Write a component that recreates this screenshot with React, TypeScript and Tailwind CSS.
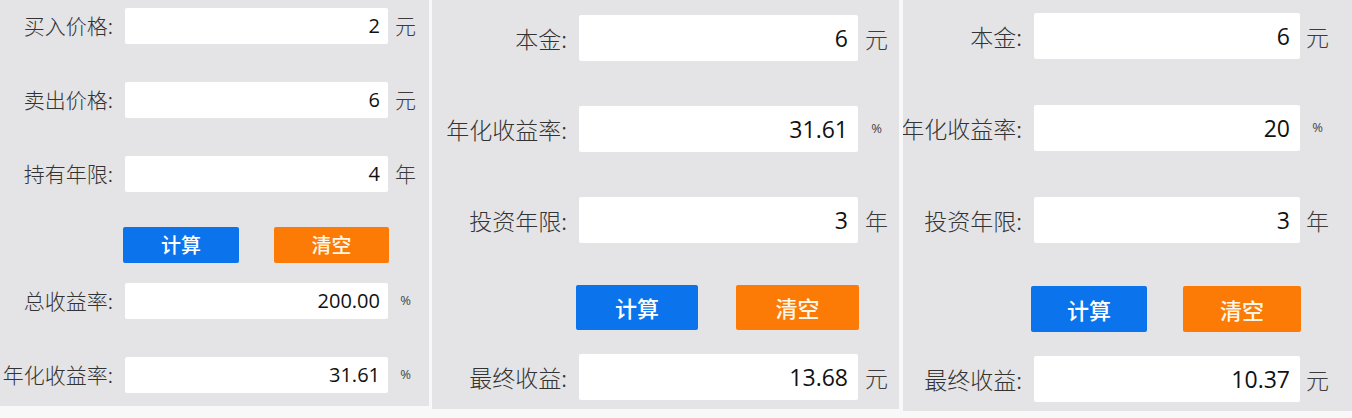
import React from "react";

type Size = {
  label: string;
  labelW: string;
  gap: string;
  input: string;
  num: string;
  unitW: string;
  unit: string;
};

const small: Size = {
  label: "text-[21px]",
  labelW: "w-[113px]",
  gap: "ml-[12px]",
  input: "w-[263px] h-[36px] pr-[8px]",
  num: "text-[20px]",
  unitW: "w-[35px]",
  unit: "text-[21px]",
};

const big: Size = {
  label: "text-[23px]",
  labelW: "w-[135px]",
  gap: "ml-[12px]",
  input: "w-[279px] h-[46px] pr-[10px]",
  num: "text-[23px]",
  unitW: "w-[37px]",
  unit: "text-[23px]",
};

const big3: Size = {
  ...big,
  labelW: "w-[119px]",
  input: "w-[266px] h-[46px] pr-[10px]",
  unitW: "w-[35px]",
};

const cjk = "font-['Noto_Sans_CJK_SC',sans-serif]";
const latin = "font-['Open_Sans','Noto_Sans_CJK_SC',sans-serif]";

function Field({
  label,
  value,
  unit,
  s,
  className = "",
}: {
  label: string;
  value: string;
  unit: string;
  s: Size;
  className?: string;
}) {
  return (
    <div className={`flex items-center ${className}`}>
      <div
        className={`${s.labelW} shrink-0 flex justify-end whitespace-nowrap text-[#333] font-light ${s.label} ${cjk}`}
      >
        <span>{label}:</span>
      </div>
      <div
        className={`${s.gap} ${s.input} shrink-0 bg-white rounded-[2px] flex items-center justify-end text-[#111] ${s.num} ${latin}`}
      >
        {value}
      </div>
      {unit === "%" ? (
        <div className={`${s.unitW} shrink-0 text-center text-[#444] text-[13px] ${latin}`}>%</div>
      ) : (
        <div className={`${s.unitW} shrink-0 text-center text-[#3c3c3c] font-light ${s.unit} ${cjk}`}>
          {unit}
        </div>
      )}
    </div>
  );
}

function Buttons({ className, blue, orange, text }: { className: string; blue: string; orange: string; text: string }) {
  return (
    <div className={`flex justify-between ${className}`}>
      <div
        className={`${blue} bg-[#0b73ec] rounded-[2px] flex items-center justify-center text-white font-medium ${text} ${cjk}`}
      >
        计算
      </div>
      <div
        className={`${orange} bg-[#fb7b06] rounded-[2px] flex items-center justify-center text-[#fff6e8] font-medium ${text} ${cjk}`}
      >
        清空
      </div>
    </div>
  );
}

export default function App() {
  return (
    <div className="w-[1352px] h-[418px] bg-[#f8f8f8] flex overflow-hidden">
      {/* panel 1 */}
      <div className="w-[429px] h-[406px] shrink-0 bg-[#e4e4e6] overflow-hidden flex flex-col pt-[8px]">
        <Field label="买入价格" value="2" unit="元" s={small} />
        <Field label="卖出价格" value="6" unit="元" s={small} className="mt-[38px]" />
        <Field label="持有年限" value="4" unit="年" s={small} className="mt-[38px]" />
        <Buttons
          className="mt-[35px] ml-[123px] w-[266px] h-[36px]"
          blue="w-[116px]"
          orange="w-[115px]"
          text="text-[20px]"
        />
        <Field label="总收益率" value="200.00" unit="%" s={small} className="mt-[20px]" />
        <Field label="年化收益率" value="31.61" unit="%" s={small} className="mt-[38px]" />
      </div>

      {/* panel 2 */}
      <div className="ml-[3px] w-[467px] h-[409px] shrink-0 bg-[#e4e4e6] overflow-hidden flex flex-col pt-[15px]">
        <Field label="本金" value="6" unit="元" s={big} />
        <Field label="年化收益率" value="31.61" unit="%" s={big} className="mt-[45px]" />
        <Field label="投资年限" value="3" unit="年" s={big} className="mt-[45px]" />
        <Buttons
          className="mt-[42px] ml-[144px] w-[283px] h-[45px]"
          blue="w-[122px]"
          orange="w-[123px]"
          text="text-[22px]"
        />
        <Field label="最终收益" value="13.68" unit="元" s={big} className="mt-[24px]" />
      </div>

      {/* panel 3 */}
      <div className="ml-[4px] flex-1 h-[411px] bg-[#e4e4e6] overflow-hidden flex flex-col pt-[13px]">
        <Field label="本金" value="6" unit="元" s={big3} />
        <Field label="年化收益率" value="20" unit="%" s={big3} className="mt-[46px]" />
        <Field label="投资年限" value="3" unit="年" s={big3} className="mt-[46px]" />
        <Buttons
          className="mt-[43px] ml-[128px] w-[270px] h-[46px]"
          blue="w-[116px]"
          orange="w-[118px]"
          text="text-[22px]"
        />
        <Field label="最终收益" value="10.37" unit="元" s={big3} className="mt-[24px]" />
      </div>
    </div>
  );
}
